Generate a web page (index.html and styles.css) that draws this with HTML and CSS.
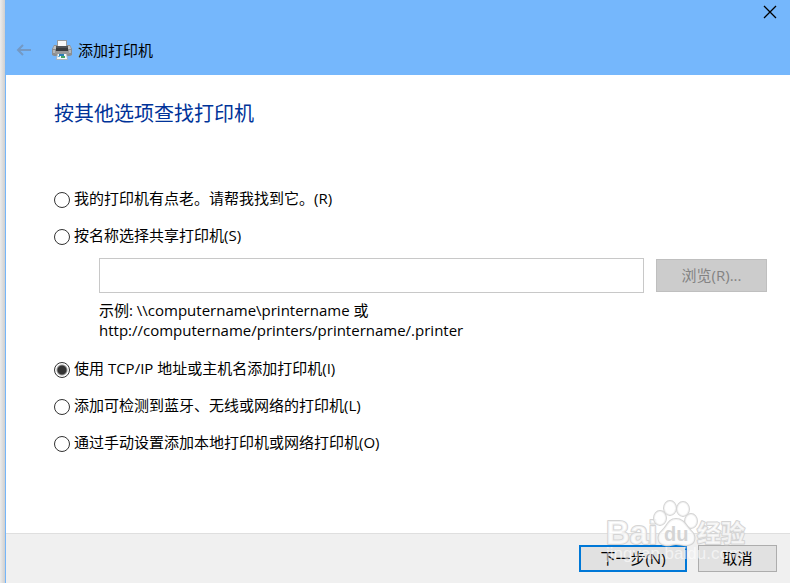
FILE: index.html
```html
<!DOCTYPE html>
<html lang="zh-CN">

<head>
  <meta charset="UTF-8">
  <meta name="viewport" content="width=device-width, initial-scale=1.0">
  <title>添加打印机</title>
  <link rel="stylesheet" href="styles.css">
</head>

<body>

  <form class="dialog">
    <header class="title-bar">
      <div class="window-controls">
        <button type="button" class="icon-button" aria-label="关闭">
          <svg width="14" height="14" viewBox="0 0 14 14" fill="none" stroke="#000" stroke-width="1.3">
            <path d="M1 1l12 12M13 1L1 13" />
          </svg>
        </button>
      </div>
      <div class="title-row">
        <button type="button" class="icon-button back-button" aria-label="返回" disabled>
          <svg width="16" height="12" viewBox="0 0 16 12" fill="none" stroke="#7499c4" stroke-width="2">
            <path d="M15 6H2M7 1L2 6l5 5" />
          </svg>
        </button>
        <svg class="printer-icon" width="20" height="20" viewBox="0 0 20 20">
          <path d="M5 0h10v8H5z" fill="#969a9d" />
          <path d="M6 1h8v7H6z" fill="#f7f7f7" />
          <path d="M2 5h3v3h10V5h3l2 4v6l-2 1H2l-2-1V9z" fill="#8c8e90" />
          <path d="M2 6h2v3H1zM16 6h2l1 3h-3z" fill="#bfc1c2" />
          <path d="M4 6h12v3H4z" fill="#505356" />
          <path d="M4 8h12v3H4z" fill="#383b3e" />
          <path d="M1 10h2v3H1zM17 10h2v3h-2z" fill="#b5b7b8" />
          <path d="M3 11h14v3H3z" fill="#97999a" />
          <path d="M5 14h10l1 6H4z" fill="#a9b5bd" />
          <path d="M6 14h8l1 5H5z" fill="#f4f8fa" />
          <path d="M7 14h5v2H7z" fill="#2b7fb5" />
          <path d="M9 16h4v2H9z" fill="#42a568" />
          <path d="M6 16h2v1H6z" fill="#6cb5df" />
        </svg>
        <span class="title">添加打印机</span>
      </div>
    </header>

    <main class="content">
      <h1 class="heading">按其他选项查找打印机</h1>

      <div class="options">
        <div class="option">
          <input type="radio" name="method" id="optionOld">
          <label for="optionOld">我的打印机有点老。请帮我找到它。(R)</label>
        </div>
        <div class="option">
          <input type="radio" name="method" id="optionShared">
          <label for="optionShared">按名称选择共享打印机(S)</label>
        </div>
        <div class="shared-printer">
          <div class="name-row">
            <input type="text" id="printerName" class="name-input" aria-label="共享打印机名称">
            <button type="button" class="browse-button" disabled>浏览(R)...</button>
          </div>
          <label class="example" for="printerName">示例: \\computername\printername 或<br>http://computername/printers/printername/.printer</label>
        </div>
        <div class="option">
          <input type="radio" name="method" id="optionTcp" checked>
          <label for="optionTcp">使用 TCP/IP 地址或主机名添加打印机(I)</label>
        </div>
        <div class="option">
          <input type="radio" name="method" id="optionWireless">
          <label for="optionWireless">添加可检测到蓝牙、无线或网络的打印机(L)</label>
        </div>
        <div class="option">
          <input type="radio" name="method" id="optionManual">
          <label for="optionManual">通过手动设置添加本地打印机或网络打印机(O)</label>
        </div>
      </div>
    </main>

    <footer class="footer">
      <button type="button" class="button primary">下一步(N)</button>
      <button type="button" class="button">取消</button>
    </footer>

    <!-- 水印 -->
    <svg class="watermark" width="150" height="76" viewBox="0 0 150 76">
      <g class="mark">
        <text x="3" y="47" font-size="33" font-weight="700">Bai</text>
        <ellipse cx="57" cy="21" rx="6" ry="7" />
        <ellipse cx="67" cy="11" rx="6" ry="7" />
        <ellipse cx="80" cy="12" rx="6" ry="7" />
        <ellipse cx="88" cy="24" rx="6" ry="7" />
        <path d="M73 22c-8 0-9 8-14 12-5 4-5 13 3 14 4 1 7-1 11-1s8 2 12 1c8-1 8-10 3-14-5-5-7-12-15-12z" />
        <text x="94" y="45" font-size="24" font-weight="700">经验</text>
      </g>
      <text class="mark-du" x="61" y="44" font-size="20" font-weight="700">du</text>
      <text class="mark-url" x="3" y="62" font-size="17">jingyan.baidu.com</text>
    </svg>
  </form>

</body>

</html>
```

FILE: styles.css
```css
* {
  box-sizing: border-box;
}

body {
  margin: 0;
  padding-left: 5px;
  background: linear-gradient(to right, #ececec, #cfcfcf 5px);
  font-family: "Open Sans", "Noto Sans CJK SC", sans-serif;
  font-size: 15px;
  line-height: 20px;
  color: #000;
}

button,
input {
  margin: 0;
  font: inherit;
}

.dialog {
  position: relative;
  display: flex;
  flex-direction: column;
  min-height: 100vh;
  border-left: 1px solid #75b6f9;
  background: #fff;
}

/* 标题栏 */
.title-bar {
  padding-bottom: 15px;
  background: #75b7fc;
}

.window-controls {
  display: flex;
  justify-content: flex-end;
  padding: 5px 13px 21px;
}

.icon-button {
  display: flex;
  padding: 0;
  border: none;
  background: none;
}

.title-row {
  display: flex;
  align-items: center;
  padding-left: 10px;
}

.printer-icon {
  margin: 0 6px 0 20px;
}

/* 内容 */
.content {
  flex: 1;
  padding: 25px 23px 24px 48px;
}

.heading {
  margin: 0;
  font-size: 20px;
  font-weight: 400;
  line-height: 28px;
  color: #003399;
}

.options {
  display: flex;
  flex-direction: column;
  gap: 17px;
  padding-top: 62px;
}

.option {
  display: flex;
  align-items: center;
  gap: 4px;
}

.option label {
  padding-bottom: 3px;
  line-height: 17px;
}

.option input {
  appearance: none;
  width: 16px;
  height: 16px;
  border: 1px solid #333;
  border-radius: 50%;
  background: #fff;
}

.option input:checked {
  background: radial-gradient(circle, #333 4px, #fff 6px);
}

.shared-printer {
  margin: -6px 0 3px;
  padding-left: 45px;
}

.name-row {
  display: flex;
  align-items: center;
  gap: 12px;
  margin-bottom: 7px;
}

.name-input {
  flex: 1;
  min-width: 0;
  height: 35px;
  padding: 0 6px;
  border: 1px solid #c8c8c8;
  background: #fff;
}

.browse-button {
  width: 111px;
  height: 33px;
  padding: 0 0 2px;
  border: 1px solid #bfbfbf;
  background: #ccc;
  color: #838383;
}

.example {
  display: block;
}

/* 底部按钮 */
.footer {
  display: flex;
  justify-content: flex-end;
  gap: 11px;
  padding: 11px 13px;
  border-top: 1px solid #dfdfdf;
  background: #f0f0f0;
}

.button {
  width: 79px;
  height: 27px;
  padding: 0 0 2px;
  border: 1px solid #adadad;
  background: #e1e1e1;
  color: #000;
}

.primary {
  width: 108px;
  border: 2px solid #0078d7;
}

/* 水印 */
.watermark {
  position: absolute;
  right: 37px;
  bottom: 10px;
  font-family: "Liberation Sans", "Noto Sans CJK SC", sans-serif;
  pointer-events: none;
}

.mark {
  fill: #fff;
  fill-opacity: 0.7;
  stroke: #d4d4d4;
  stroke-width: 2;
  stroke-linejoin: round;
  paint-order: stroke;
}

.mark-du {
  fill: #d4d4d4;
}

.mark-url {
  fill: #fff;
  fill-opacity: 0.6;
}
```
